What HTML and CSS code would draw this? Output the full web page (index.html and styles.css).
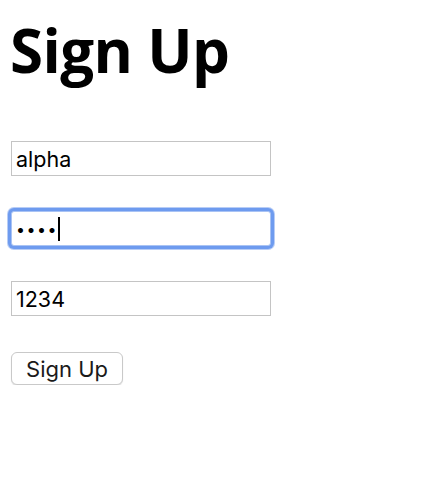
FILE: index.html
```html
<!DOCTYPE html>
<html>
<head>
<meta charset="utf-8">
<link rel="stylesheet" href="styles.css">
</head>
<body>
<h1 class="title">Sign Up</h1>
<form class="form">
  <input class="field" type="text" value="alpha">
  <div class="field field-focus"><span class="dots">••••</span><span class="caret"></span></div>
  <input class="field" type="text" value="1234">
  <button class="btn" type="button">Sign Up</button>
</form>
</body>
</html>
```
FILE: styles.css
```css
html, body {
  margin: 0;
  padding: 0;
  background: #fff;
}
body {
  padding: 0 11px;
  font-family: "Inter", "Liberation Sans", sans-serif;
}
.title {
  font-family: "Open Sans", sans-serif;
  font-weight: 700;
  font-size: 60px;
  line-height: 84px;
  margin: 8px 0 0 -1px;
  color: #000;
  letter-spacing: -0.6px;
}
.form {
  display: flex;
  flex-direction: column;
  align-items: flex-start;
  gap: 35px;
  margin-top: 49px;
}
.field {
  box-sizing: border-box;
  width: 260px;
  height: 35px;
  border: 1px solid #c4c4c4;
  padding: 0 4px;
  margin: 0;
  font-family: "Inter", "Liberation Sans", sans-serif;
  font-size: 21.5px;
  color: #000;
  background: #fff;
  outline: none;
  border-radius: 0;
}
.field-focus {
  display: flex;
  align-items: center;
  border: 1px solid #a9c3f4;
  box-shadow: 0 0 0 3px #6e9bef, 0 0 0 4px #b8cdf6;
  border-radius: 3px;
  padding: 0 4px;
}
.dots {
  font-size: 16px;
  letter-spacing: 1.5px;
  line-height: 1;
}
.caret {
  display: inline-block;
  width: 2px;
  height: 24px;
  background: #000;
  margin-left: 0;
}
.btn {
  box-sizing: border-box;
  height: 33px;
  width: 112px;
  margin-top: 1px;
  border: 1px solid #c9c9c9;
  border-radius: 6px;
  background: #fff;
  box-shadow: 0 1px 1px rgba(0,0,0,0.12);
  font-family: "Inter", "Liberation Sans", sans-serif;
  font-size: 22px;
  color: #1a1a1a;
  padding: 0;
}
```
